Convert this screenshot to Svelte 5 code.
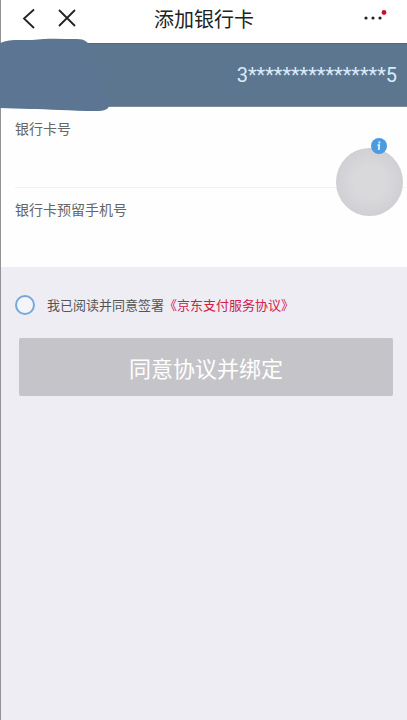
<script lang="ts">
  let cardNumber = $state('');
  let phone = $state('');
  let agreed = $state(false);

  const maskedId = '3' + '*'.repeat(16) + '5';
</script>

<div class="page">
  <header class="navbar">
    <div class="nav-side">
      <button class="icon-btn" type="button" aria-label="返回">
        <svg width="16" height="22" viewBox="0 0 16 22">
          <path d="M13 1.500 3 10.500l10 9.500" />
        </svg>
      </button>
      <button class="icon-btn" type="button" aria-label="关闭">
        <svg width="20" height="20" viewBox="0 0 20 20">
          <path d="m2 1 16 16M18 1 2 17" />
        </svg>
      </button>
    </div>
    <h1>添加银行卡</h1>
    <div class="nav-side end">
      <button class="icon-btn" type="button" aria-label="更多">
        <svg width="24" height="18" viewBox="0 0 24 18">
          <circle cx="3" cy="8" r="1.6" />
          <circle cx="10" cy="8" r="1.6" />
          <circle cx="17" cy="8" r="1.6" />
          <circle class="dot" cx="21" cy="2.500" r="2.400" />
        </svg>
      </button>
    </div>
  </header>

  <section class="identity">
    <svg class="scribble" width="110" height="74" viewBox="0 0 110 74" aria-hidden="true">
      <path
        d="M0 5C9 1 18 2 32 2 48 0 62 1 77 1c8 0 11 3 13 8l2 8 17 50c0 4-4 6-13 6C70 73 48 71 30 71L0 70Z"
      />
    </svg>
    <span>{maskedId}</span>
  </section>

  <main>
    <form class="fields">
      <div class="field">
        <label for="card">银行卡号</label>
        <input id="card" type="text" inputmode="numeric" bind:value={cardNumber} />
      </div>
      <div class="field">
        <label for="phone">银行卡预留手机号</label>
        <input id="phone" type="tel" bind:value={phone} />
      </div>
      <button class="assist" type="button" aria-label="辅助"></button>
      <button class="info" type="button" aria-label="说明">
        <svg width="16" height="16" viewBox="0 0 16 16">
          <circle cx="8" cy="8" r="8" />
          <path d="M8.500 3.500 8.200 5.500M6.500 7.200H8.200L7.800 12" />
        </svg>
      </button>
    </form>

    <div class="agreement">
      <input id="agree" type="checkbox" bind:checked={agreed} />
      <label for="agree">我已阅读并同意签署</label>
      <a href="#agreement">《京东支付服务协议》</a>
    </div>

    <button class="submit" type="button">同意协议并绑定</button>
  </main>
</div>

<style>
  :global(body) {
    margin: 0;
    background: #eeedf3;
  }
  .page {
    box-sizing: border-box;
    min-height: 100vh;
    border-left: 1px solid #929294;
    font-family: 'Noto Sans CJK SC', sans-serif;
    color: #222;
  }
  button {
    border: 0;
    padding: 0;
    font-family: inherit;
    cursor: pointer;
  }
  .navbar {
    display: flex;
    align-items: center;
    height: 43px;
    padding-bottom: 6px;
    box-sizing: border-box;
    background: #fff;
  }
  .nav-side {
    display: flex;
    flex: 1;
    align-items: center;
    gap: 20px;
    padding: 0 20px;
  }
  .nav-side.end {
    justify-content: flex-end;
  }
  .icon-btn {
    display: flex;
    background: none;
  }
  .icon-btn path {
    fill: none;
    stroke: #222;
    stroke-width: 1.8;
  }
  .icon-btn circle {
    fill: #222;
  }
  .icon-btn .dot {
    fill: #c9102f;
  }
  h1 {
    margin: 0;
    font-size: 20px;
    font-weight: 400;
    line-height: 28px;
  }
  .identity {
    position: relative;
    z-index: 1;
    display: flex;
    align-items: center;
    justify-content: flex-end;
    box-sizing: border-box;
    height: 64px;
    padding-right: 10px;
    border-top: 1px solid #68636d;
    border-bottom: 1px solid #7a8b98;
    background: #5c768f;
    color: #d9ebfb;
    font-family: Roboto, sans-serif;
    font-size: 20px;
    line-height: 28px;
  }
  .scribble {
    position: absolute;
    top: -6px;
    left: -1px;
    fill: #5c7593;
  }
  .fields {
    position: relative;
    background: #fefefe;
  }
  .field {
    display: flex;
    flex-direction: column;
    box-sizing: border-box;
    height: 80px;
    margin-left: 14px;
    padding-top: 11px;
  }
  .field + .field {
    border-top: 1px solid #f2f2f3;
  }
  .field label {
    color: #666;
    font-size: 14px;
    line-height: 20px;
  }
  .field input {
    flex: 1;
    min-width: 0;
    border: 0;
    padding: 0;
    outline: 0;
    background: none;
    font: inherit;
    font-size: 16px;
  }
  .assist {
    position: absolute;
    top: 41px;
    right: 4px;
    width: 67px;
    height: 68px;
    border: 1px solid #cfced1;
    border-radius: 50%;
    background: radial-gradient(#d9d8db 0 35%, #d1d0d4 70%);
  }
  .info {
    position: absolute;
    top: 31px;
    right: 20px;
    display: flex;
    background: none;
  }
  .info circle {
    fill: #4b9be0;
  }
  .info path {
    fill: none;
    stroke: #e4f2ff;
    stroke-width: 1.8;
  }
  .agreement {
    display: flex;
    align-items: center;
    padding: 28px 14px 23px;
    font-size: 13px;
    line-height: 20px;
  }
  .agreement input {
    appearance: none;
    width: 20px;
    height: 20px;
    margin: 0 12px 0 0;
    border: 2px solid #74a9dc;
    border-radius: 50%;
    background: #f4f4f9;
  }
  .agreement input:checked {
    background: #74a9dc;
  }
  .agreement label {
    color: #555;
  }
  .agreement a {
    color: #d0204a;
    text-decoration: none;
  }
  .submit {
    display: block;
    width: calc(100% - 32px);
    height: 58px;
    margin: 0 14px 0 18px;
    border-radius: 2px;
    background: #c5c4c8;
    color: #fff;
    font-size: 22px;
    line-height: 28px;
  }
</style>
